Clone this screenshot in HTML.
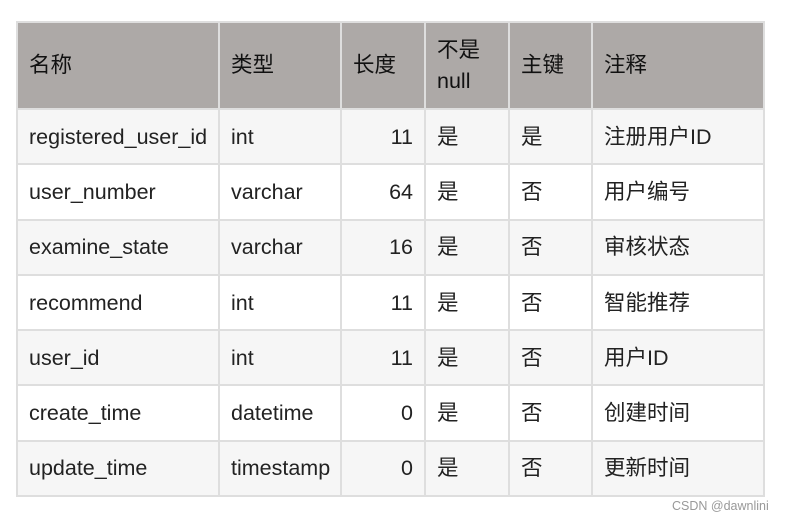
<!DOCTYPE html>
<html><head><meta charset="utf-8"><style>
html,body{margin:0;padding:0;background:#fff;width:788px;height:520px;overflow:hidden;}
table{position:absolute;left:16px;top:21px;border-collapse:collapse;table-layout:fixed;font-family:"Liberation Sans","Noto Sans CJK SC",sans-serif;font-size:21.5px;color:#222;}
td,th{border:2px solid #dedede;padding:0 0 0 11px;text-align:left;font-weight:normal;overflow:hidden;white-space:nowrap;vertical-align:middle;line-height:24px;}
th{background:#ada9a7;height:85px;line-height:31px;color:#111;}
td{height:53.3px;}
tr:nth-child(even) td{background:#f6f6f6;}
td.r{text-align:right;padding:0 11px 0 0;}
.wm{position:absolute;left:672px;top:499px;font-family:"Liberation Sans",sans-serif;font-size:12.5px;color:#999;}
</style></head><body>
<table>
<colgroup><col style="width:202px"><col style="width:122px"><col style="width:84px"><col style="width:84px"><col style="width:83px"><col style="width:172px"></colgroup>
<tr><th>名称</th><th>类型</th><th>长度</th><th>不是<br>null</th><th>主键</th><th>注释</th></tr>
<tr><td>registered_user_id</td><td>int</td><td class="r">11</td><td>是</td><td>是</td><td>注册用户ID</td></tr>
<tr><td>user_number</td><td>varchar</td><td class="r">64</td><td>是</td><td>否</td><td>用户编号</td></tr>
<tr><td>examine_state</td><td>varchar</td><td class="r">16</td><td>是</td><td>否</td><td>审核状态</td></tr>
<tr><td>recommend</td><td>int</td><td class="r">11</td><td>是</td><td>否</td><td>智能推荐</td></tr>
<tr><td>user_id</td><td>int</td><td class="r">11</td><td>是</td><td>否</td><td>用户ID</td></tr>
<tr><td>create_time</td><td>datetime</td><td class="r">0</td><td>是</td><td>否</td><td>创建时间</td></tr>
<tr><td>update_time</td><td>timestamp</td><td class="r">0</td><td>是</td><td>否</td><td>更新时间</td></tr>
</table>
<div class="wm">CSDN @dawnlini</div>
</body></html>
